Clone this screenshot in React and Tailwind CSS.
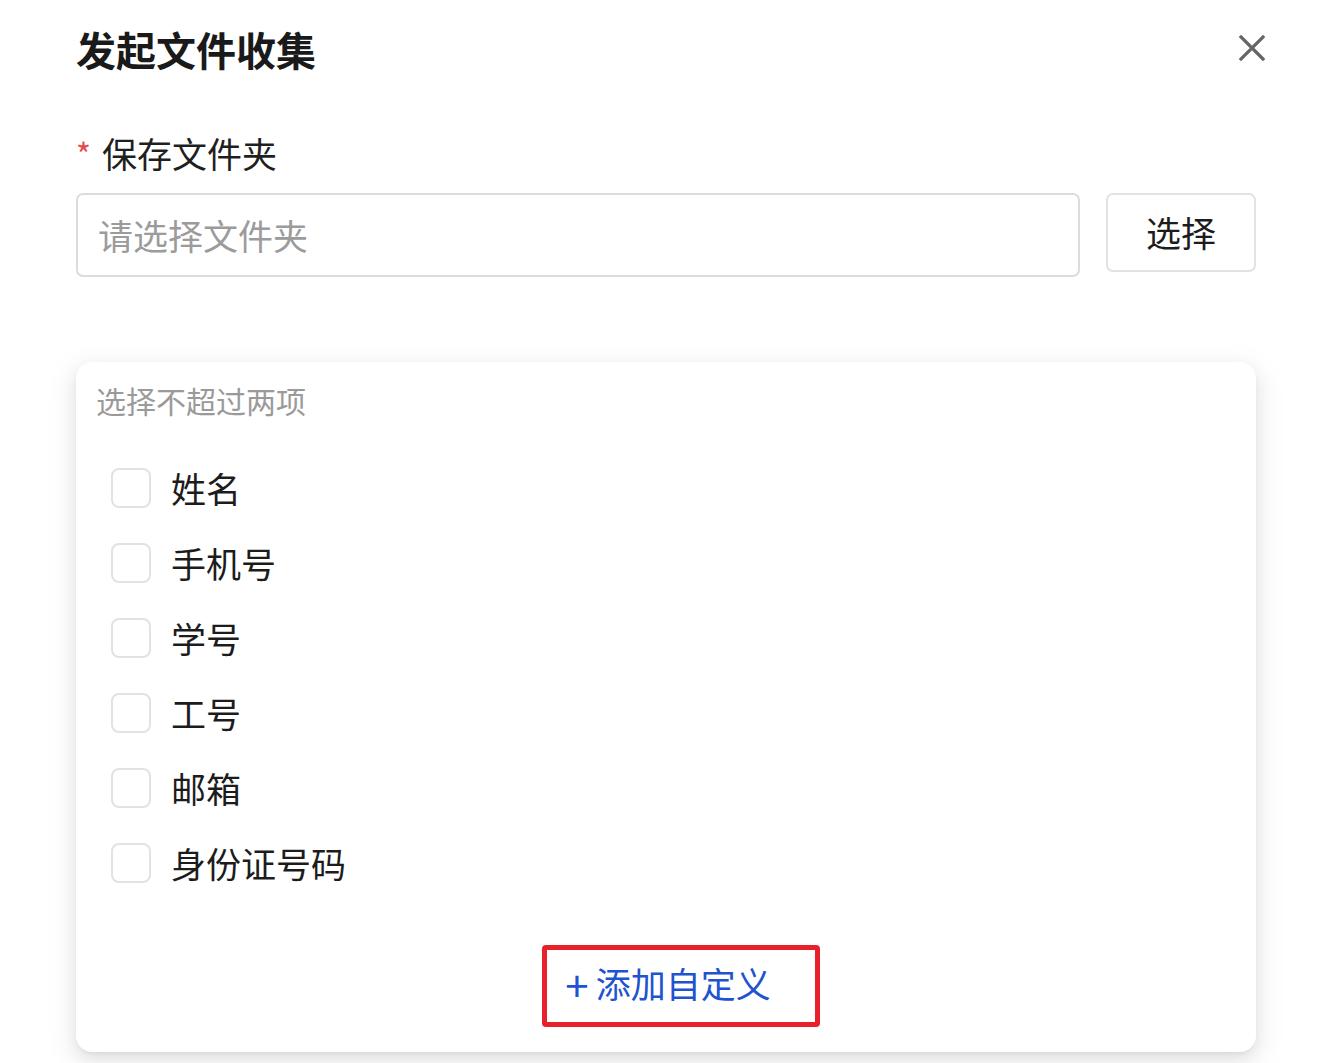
import React, { useState } from 'react';

const fields = ['姓名', '手机号', '学号', '工号', '邮箱', '身份证号码'];

const font = { fontFamily: '"Noto Sans CJK SC", "Noto Sans", sans-serif' };

function CloseIcon() {
  return (
    <svg width="28" height="28" viewBox="0 0 28 28" className="text-[#666]">
      <path d="M3 3 L25 25 M25 3 L3 25" stroke="currentColor" strokeWidth="3.2" strokeLinecap="square" />
    </svg>
  );
}

function FieldRow({ label, checked, onToggle }) {
  return (
    <div className="flex h-[75px] items-center cursor-pointer" onClick={onToggle}>
      <span
        className={`h-[40px] w-[40px] rounded-[8px] border-2 ${checked ? 'border-[#2152d0] bg-[#2152d0]' : 'border-[#e2e2e6] bg-white'}`}
      />
      <span className="ml-[20px] text-[35px] leading-[44px] text-[#1c1c1c]">{label}</span>
    </div>
  );
}

export default function App() {
  const [checked, setChecked] = useState({});

  const toggle = (name) => {
    setChecked((prev) => ({ ...prev, [name]: !prev[name] }));
  };

  return (
    <div className="min-h-[1063px] w-[1336px] overflow-hidden bg-white" style={font}>
      <div className="pl-[76px] pr-[80px]">
        {/* header */}
        <div className="flex items-center justify-between pt-[26px]">
          <h1 className="text-[40px] font-bold leading-[46px] text-[#1a1a1a]">发起文件收集</h1>
          <button type="button" className="mr-[-10px] mt-[-2px]">
            <CloseIcon />
          </button>
        </div>

        {/* folder field */}
        <div className="mt-[61px] flex items-center text-[35px] leading-[40px] text-[#1f1f1f]">
          <span className="mr-[11px] text-[32px] text-[#e5484d]">*</span>
          保存文件夹
        </div>
        <div className="mt-[20px] flex items-start gap-[26px]">
          <div className="flex h-[84px] flex-1 items-center rounded-[7px] border-2 border-[#dcdcdc] px-[20px] text-[35px] text-[#9b9b9b]">
            请选择文件夹
          </div>
          <button
            type="button"
            className="flex h-[79px] w-[150px] items-center justify-center rounded-[7px] border-2 border-[#e2e2e6] text-[35px] text-[#1c1c1c]"
          >
            选择
          </button>
        </div>

        {/* dropdown card */}
        <div className="mt-[85px] rounded-[16px] bg-white pb-[25px] pt-[18px] shadow-[0_6px_16px_rgba(0,0,0,0.08),0_3px_6px_-4px_rgba(0,0,0,0.12),0_9px_28px_8px_rgba(0,0,0,0.05)]">
          <div className="pl-[20px] text-[30px] leading-[40px] text-[#9a9a9a]">选择不超过两项</div>
          <div className="mt-[30px] pl-[35px]">
            {fields.map((f) => (
              <FieldRow key={f} label={f} checked={!!checked[f]} onToggle={() => toggle(f)} />
            ))}
          </div>
          <div className="mt-[45px] flex justify-center">
            <button
              type="button"
              className="ml-[30px] flex h-[82px] items-center rounded-[4px] border-[5px] border-[#e8202a] pb-[5px] pl-[18px] pr-[44px] text-[35px] text-[#2152d0]"
            >
              <span className="mr-[7px] text-[42px] font-normal leading-[40px]">+</span>
              添加自定义
            </button>
          </div>
        </div>
      </div>
    </div>
  );
}
